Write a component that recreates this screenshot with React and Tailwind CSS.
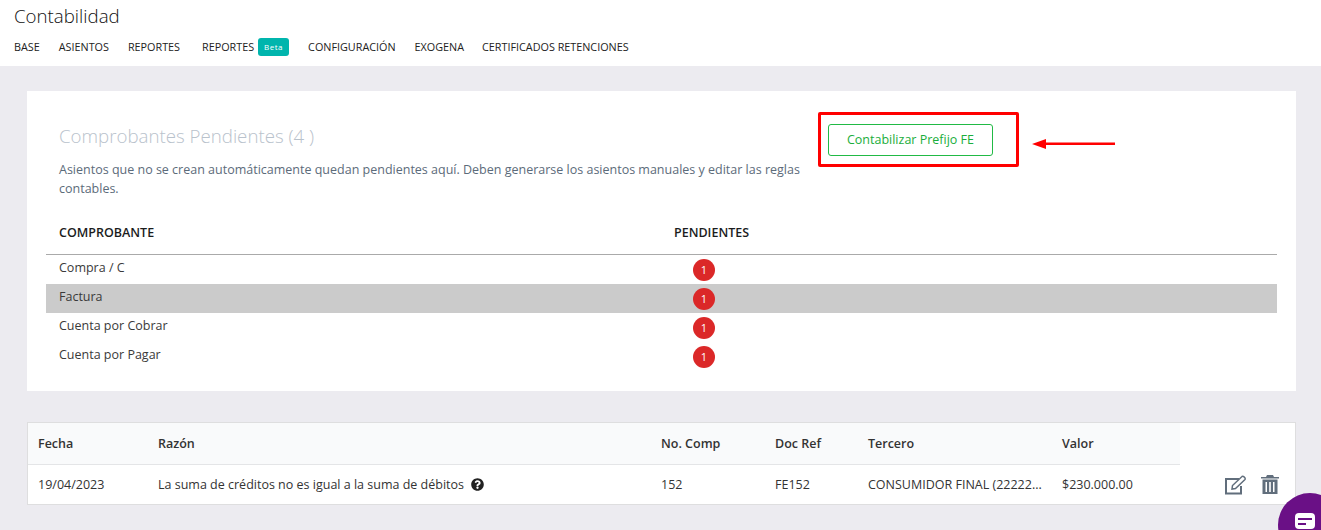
import { FaQuestionCircle } from "react-icons/fa";

const navItems = ["BASE", "ASIENTOS", "REPORTES"];
const navRest = ["CONFIGURACIÓN", "EXOGENA", "CERTIFICADOS RETENCIONES"];
const pending = ["Compra / C", "Factura", "Cuenta por Cobrar", "Cuenta por Pagar"];

function EditIcon() {
  return (
    <svg width="22" height="20" viewBox="0 0 22 20" fill="none" stroke="#616e7c" strokeWidth="2">
      <path d="M14 4 H1 V18.5 H16 V11" />
      <path d="M7 14 L7.5 10.5 L17 1.5 Q18 1 19 1.8 L20 3 Q20.5 4 20 4.5 L10.5 13.5 Z" strokeWidth="1.5" />
    </svg>
  );
}

function TrashIcon() {
  return (
    <svg width="18" height="19" viewBox="0 0 18 19" fill="#616e7c">
      <path d="M6 0 H12 L13 2 H18 V3.5 H0 V2 H5 Z" />
      <path fillRule="evenodd" d="M1.5 4.5 H16.5 V19 H1.5 Z M4.5 7 V17 H6 V7 Z M8.2 7 V17 H9.8 V7 Z M12 7 V17 H13.5 V7 Z" />
    </svg>
  );
}

function App() {
  return (
    <div className="relative h-[530px] overflow-hidden bg-[#ecebf0] font-['Open_Sans',sans-serif] text-[#333]">
      <header className="h-[66px] bg-white pl-[14px] pt-[4px]">
        <h1 className="text-[18.7px] leading-[24px] font-light text-[#111]">Contabilidad</h1>
        <nav className="mt-[9px] flex h-[20px] items-center text-[10.8px] text-[#222]">
          {navItems.map((item) => (
            <a key={item} className="mr-[19px]">{item}</a>
          ))}
          <a className="ml-[3px] flex items-center">
            REPORTES
            <span className="ml-[4px] flex h-[18px] w-[31px] items-center justify-center rounded-[3px] bg-[#00b5ad] text-[8px] tracking-[0.5px] text-white">
              Beta
            </span>
          </a>
          {navRest.map((item, i) => (
            <a key={item} className={i === 0 ? "mr-[19px] ml-[19px]" : "mr-[18px]"}>{item}</a>
          ))}
        </nav>
      </header>

      <section className="mr-[25px] ml-[27px] mt-[25px] h-[300px] bg-white px-[19px] pt-[33px]">
        <div className="flex items-start">
          <div className="w-[782px] pl-[13px]">
            <h2 className="text-[18.7px] leading-[24px] font-light text-[#b9c2cc]">Comprobantes Pendientes (4 )</h2>
            <p className="mt-[12px] w-[750px] text-[12.5px] leading-[19px] text-[#5c6b7a]">
              Asientos que no se crean automáticamente quedan pendientes aquí. Deben generarse los asientos manuales y editar las reglas contables.
            </p>
          </div>
          <button className="h-[32px] w-[165px] rounded-[3px] border border-[#21ba45] text-[12.5px] text-[#1aae3c]">
            Contabilizar Prefijo FE
          </button>
        </div>

        <div className="mt-[25px] flex h-[32px] items-start border-b border-[#aaa] pt-[1px] pl-[13px] text-[12.5px] leading-[18px] font-semibold text-[#1b1c1d]">
          <span className="w-[615px]">COMPROBANTE</span>
          <span>PENDIENTES</span>
        </div>
        {pending.map((name, i) => (
          <div key={name} className={"flex h-[29px] pl-[13px] text-[12.5px] text-[#3a3a3a] " + (i === 1 ? "bg-[#cbcbcb]" : "")}>
            <span className="w-[634px] pt-[4px]">{name}</span>
            <span className="mt-[4px] flex h-[22px] w-[22px] items-center justify-center rounded-full bg-[#db2828] text-[11px] text-white">1</span>
          </div>
        ))}
      </section>

      <section className="mr-[25px] ml-[27px] mt-[31px] h-[83px] border border-[#dededf] bg-white text-[12.5px]">
        <div className="flex h-[42px] w-[1152px] items-center border-b border-[#e4e5e7] bg-[#f9fafb] pt-[2px] font-semibold text-[#333]">
          <span className="w-[130px] pl-[10px]">Fecha</span>
          <span className="w-[503px]">Razón</span>
          <span className="w-[114px]">No. Comp</span>
          <span className="w-[93px]">Doc Ref</span>
          <span className="w-[194px]">Tercero</span>
          <span>Valor</span>
        </div>
        <div className="flex h-[39px] items-center text-[#333]">
          <span className="w-[130px] pt-[2px] pl-[10px]">19/04/2023</span>
          <span className="flex w-[503px] items-center pt-[2px]">
            La suma de créditos no es igual a la suma de débitos
            <FaQuestionCircle className="-mt-[2px] ml-[7px] text-[13px] text-[#222]" />
          </span>
          <span className="w-[114px] pt-[2px]">152</span>
          <span className="w-[93px] pt-[2px]">FE152</span>
          <span className="w-[194px] whitespace-nowrap pt-[2px]">CONSUMIDOR FINAL (22222...</span>
          <span className="w-[163px] pt-[2px]">$230.000.00</span>
          <EditIcon />
          <span className="ml-[14px]"><TrashIcon /></span>
        </div>
      </section>

      {/* annotation drawn over the page */}
      <div className="absolute top-[112px] left-[818px] h-[55px] w-[201px] rounded-[2px] border-[3px] border-[#ff0000]" />
      <svg className="absolute top-[138px] left-[1030px]" width="88" height="12" viewBox="0 0 88 12">
        <path d="M2 6 L16 1 L16 4.5 L85 4.5 L85 7 L16 7 L16 11 Z" fill="#ff0000" />
      </svg>

      {/* chat bubble */}
      <div className="absolute top-[493px] left-[1278px] h-[64px] w-[64px] rounded-full bg-[#6a1086]">
        <svg className="absolute top-[20px] left-[17px]" width="20" height="16" viewBox="0 0 20 16">
          <path d="M4 0 H16 A4 4 0 0 1 20 4 V12 A4 4 0 0 1 16 16 H4 A4 4 0 0 1 0 12 V4 A4 4 0 0 1 4 0 Z" fill="#fff" />
          <rect x="3" y="5" width="14" height="2" fill="#6a1086" />
          <rect x="3" y="10" width="8" height="2" fill="#6a1086" />
        </svg>
      </div>
    </div>
  );
}

export default App;
